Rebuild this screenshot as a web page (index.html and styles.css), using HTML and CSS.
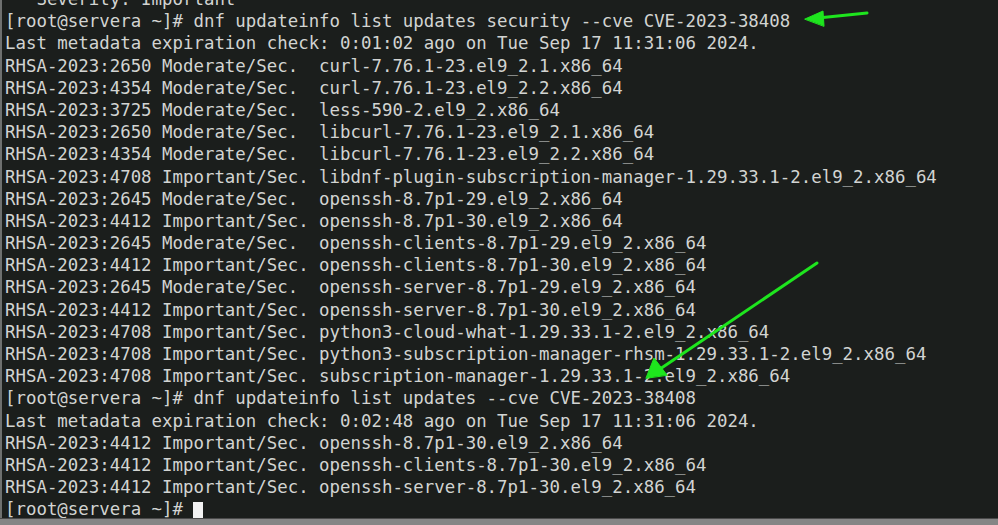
FILE: index.html
```html
<!DOCTYPE html>
<html>
<head>
<meta charset="utf-8">
<link rel="stylesheet" href="styles.css">
</head>
<body>
<div class="term">
<pre class="out">   Severity: Important
[root@servera ~]# dnf updateinfo list updates security --cve CVE-2023-38408
Last metadata expiration check: 0:01:02 ago on Tue Sep 17 11:31:06 2024.
RHSA-2023:2650 Moderate/Sec.  curl-7.76.1-23.el9_2.1.x86_64
RHSA-2023:4354 Moderate/Sec.  curl-7.76.1-23.el9_2.2.x86_64
RHSA-2023:3725 Moderate/Sec.  less-590-2.el9_2.x86_64
RHSA-2023:2650 Moderate/Sec.  libcurl-7.76.1-23.el9_2.1.x86_64
RHSA-2023:4354 Moderate/Sec.  libcurl-7.76.1-23.el9_2.2.x86_64
RHSA-2023:4708 Important/Sec. libdnf-plugin-subscription-manager-1.29.33.1-2.el9_2.x86_64
RHSA-2023:2645 Moderate/Sec.  openssh-8.7p1-29.el9_2.x86_64
RHSA-2023:4412 Important/Sec. openssh-8.7p1-30.el9_2.x86_64
RHSA-2023:2645 Moderate/Sec.  openssh-clients-8.7p1-29.el9_2.x86_64
RHSA-2023:4412 Important/Sec. openssh-clients-8.7p1-30.el9_2.x86_64
RHSA-2023:2645 Moderate/Sec.  openssh-server-8.7p1-29.el9_2.x86_64
RHSA-2023:4412 Important/Sec. openssh-server-8.7p1-30.el9_2.x86_64
RHSA-2023:4708 Important/Sec. python3-cloud-what-1.29.33.1-2.el9_2.x86_64
RHSA-2023:4708 Important/Sec. python3-subscription-manager-rhsm-1.29.33.1-2.el9_2.x86_64
RHSA-2023:4708 Important/Sec. subscription-manager-1.29.33.1-2.el9_2.x86_64
[root@servera ~]# dnf updateinfo list updates --cve CVE-2023-38408
Last metadata expiration check: 0:02:48 ago on Tue Sep 17 11:31:06 2024.
RHSA-2023:4412 Important/Sec. openssh-8.7p1-30.el9_2.x86_64
RHSA-2023:4412 Important/Sec. openssh-clients-8.7p1-30.el9_2.x86_64
RHSA-2023:4412 Important/Sec. openssh-server-8.7p1-30.el9_2.x86_64
[root@servera ~]# <span class="cursor"> </span></pre>
<svg class="arrows" width="998" height="525" viewBox="0 0 998 525">
  <g stroke="#1ee51e" stroke-width="3" stroke-linecap="round" fill="#1ee51e">
    <line x1="867" y1="13" x2="818" y2="18"/>
    <polygon points="805,19 823,11 824,26" stroke-width="1" stroke-linejoin="round"/>
    <line x1="817" y1="263" x2="660" y2="369"/>
    <polygon points="646,378 654,358 667,375" stroke-width="1" stroke-linejoin="round"/>
  </g>
</svg>
</div>
<div class="bottom"></div>
</body>
</html>
```
FILE: styles.css
```css
html, body {
  margin: 0;
  padding: 0;
  background: #1b1e1c;
  overflow: hidden;
}
body {
  width: 998px;
  height: 525px;
  display: flex;
  flex-direction: column;
}
.term {
  position: relative;
  flex: 1;
  overflow: hidden;
  border-left: 2px solid #6e706f;
  background: #1b1e1c;
}
.out {
  margin: -12px 0 0 0;
  padding: 0 0 0 3px;
  font-family: "DejaVu Sans Mono", monospace;
  font-size: 17.4px;
  line-height: 22.18px;
  color: #d2d4d2;
  white-space: pre;
}
.cursor {
  display: inline-block;
  background: #f2f2f2;
  width: 10px;
  height: 20px;
  vertical-align: -4px;
}
.arrows {
  position: absolute;
  left: -2px;
  top: 0;
}
.bottom {
  height: 6px;
  background: #858585;
  border-top: 1px solid #4a4a4a;
}
```
